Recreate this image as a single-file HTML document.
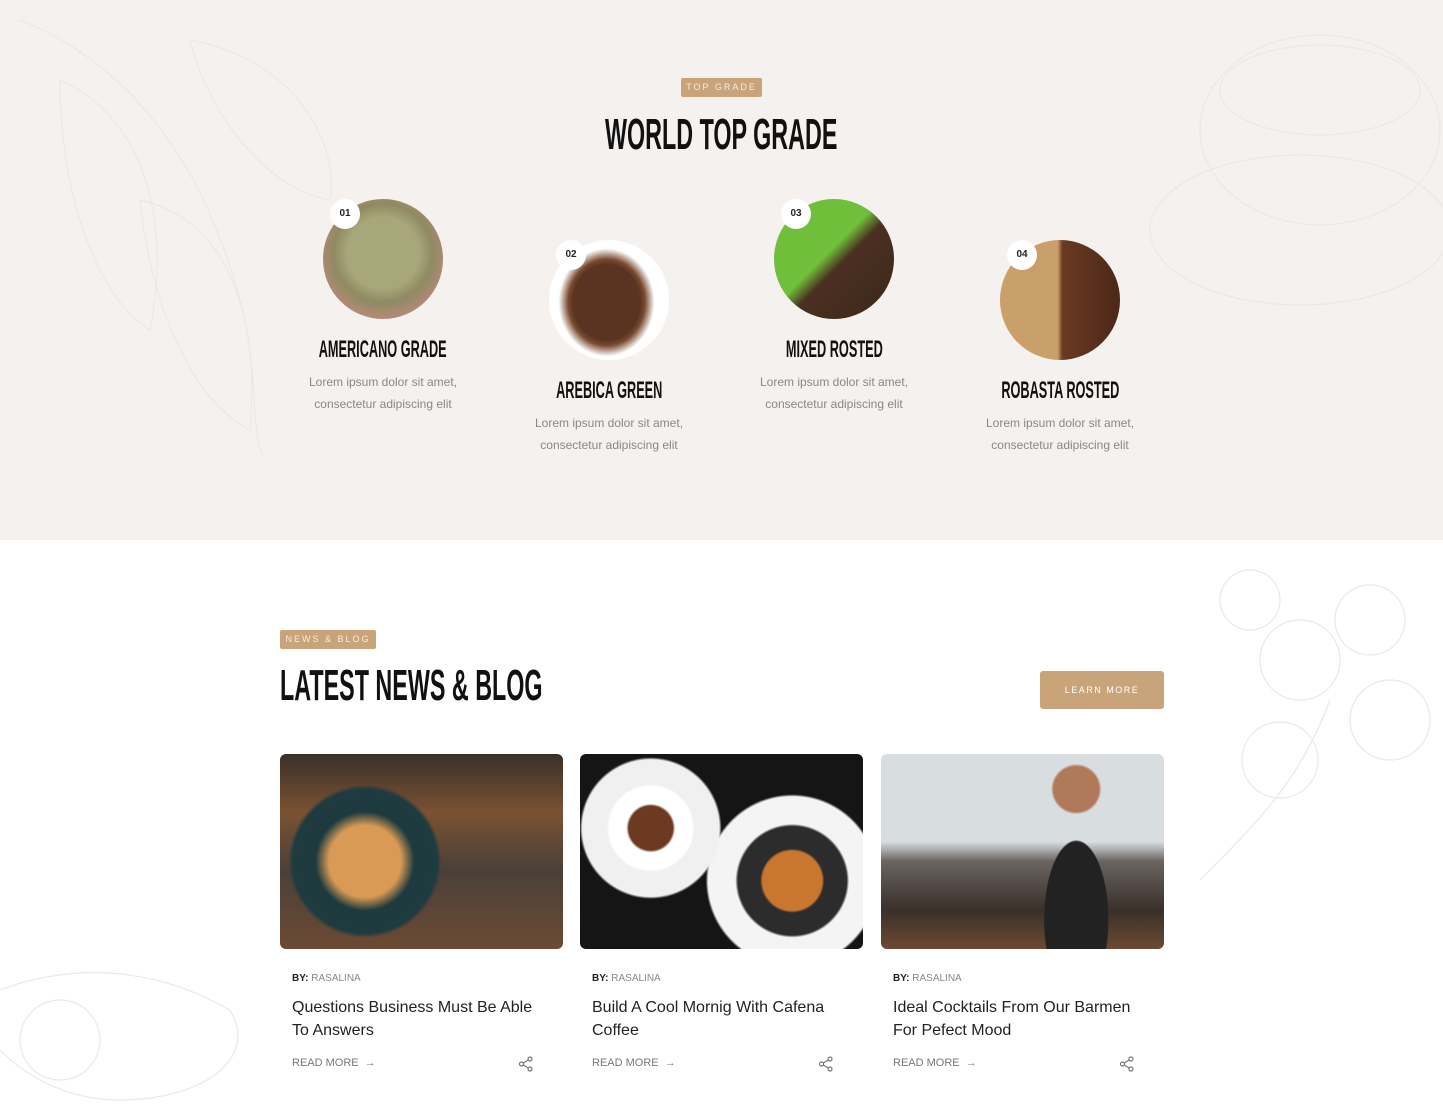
<!DOCTYPE html>
<html><head><meta charset="utf-8"><style>
*{margin:0;padding:0;box-sizing:border-box}
body{width:1443px;height:1116px;position:relative;background:#fff;font-family:"Liberation Sans",sans-serif;overflow:hidden}
.top{position:absolute;left:0;top:0;width:1443px;height:540px;background:#f4f1ee}
.cond{font-family:"Liberation Sans Narrow","Liberation Sans",sans-serif;font-weight:700;color:#111;display:inline-block;transform:scaleX(.53);white-space:nowrap}
.tag{position:absolute;background:#c9a37a;color:#f6ecdf;font-size:9px;letter-spacing:2px;text-align:center;border-radius:2px}
.item{position:absolute;width:300px;text-align:center}
.circ{width:120px;height:120px;border-radius:50%;margin:0 auto;position:relative}
.num{position:absolute;left:7px;top:0;width:30px;height:30px;border-radius:50%;background:#fff;font-size:10px;font-weight:700;line-height:30px;text-align:center;color:#222}
.item h3{margin-top:18px;height:26px;font-size:24px;line-height:26px}
.item p{margin-top:8px;font-size:12px;color:#888;line-height:22px}
.card{position:absolute;top:754px;width:283px}
.img{height:195px;border-radius:6px;overflow:hidden;position:relative}
.by{margin:24px 0 0 12px;font-size:10px;color:#888}
.by b{color:#222}
.ct{margin:12px 0 0 12px;font-size:16px;color:#222;line-height:23px}
.rm{position:absolute;top:303px;left:12px;font-size:11px;color:#777}
.sh{position:absolute;top:302px;left:238px}
</style></head><body>
<div class="top"></div>
<svg style="position:absolute;left:0;top:0" width="1443" height="1116" fill="none" stroke="#ebe8e5" stroke-width="1.2">
<path d="M20 20 C120 60 200 150 240 300 C260 380 250 420 262 455"/><path d="M60 80 C150 120 170 230 150 330 C100 300 60 200 60 80Z"/><path d="M140 200 C230 220 260 320 250 430 C190 400 150 300 140 200Z"/><path d="M190 40 C300 60 340 150 330 200 C270 190 210 120 190 40Z"/>
<ellipse cx="1320" cy="130" rx="120" ry="95"/><ellipse cx="1300" cy="230" rx="150" ry="75"/><ellipse cx="1320" cy="90" rx="100" ry="45"/>
<circle cx="1300" cy="660" r="40"/><circle cx="1370" cy="620" r="35"/><circle cx="1280" cy="760" r="38"/><circle cx="1390" cy="720" r="40"/><circle cx="1250" cy="600" r="30"/><path d="M1200 880 C1260 820 1300 780 1330 700"/>
<path d="M0 990 C80 960 160 970 230 1010 C260 1060 200 1100 120 1100 C60 1100 20 1070 0 1050"/><circle cx="60" cy="1040" r="40"/>
</svg>
<div class="tag" style="left:681px;top:78px;width:81px;height:19px;line-height:19px">TOP GRADE</div>
<div style="position:absolute;left:0;width:1443px;top:110px;text-align:center"><span class="cond" style="font-size:44px;line-height:50px">WORLD TOP GRADE</span></div>

<div class="item" style="left:233px;top:199px"><div class="circ" style="background:radial-gradient(circle at 50% 45%,#a8a77a 0 40%,#8f8a63 55%,#b78a78 75%,#5a5648)"><div class="num">01</div></div><h3><span class="cond">AMERICANO GRADE</span></h3><p>Lorem ipsum dolor sit amet,<br>consectetur adipiscing elit</p></div>
<div class="item" style="left:459px;top:240px"><div class="circ" style="background:radial-gradient(ellipse 40% 45% at 48% 52%,#5a3420 0 70%,#7a4a30 80%,#fff 100%)"><div class="num">02</div></div><h3><span class="cond">AREBICA GREEN</span></h3><p>Lorem ipsum dolor sit amet,<br>consectetur adipiscing elit</p></div>
<div class="item" style="left:684px;top:199px"><div class="circ" style="background:linear-gradient(135deg,#6fbf3a 0 45%,#4a3020 55%,#3b271b)"><div class="num">03</div></div><h3><span class="cond">MIXED ROSTED</span></h3><p>Lorem ipsum dolor sit amet,<br>consectetur adipiscing elit</p></div>
<div class="item" style="left:910px;top:240px"><div class="circ" style="background:linear-gradient(90deg,#c9a06a 0 48%,#6a3a22 52%,#4b2818)"><div class="num">04</div></div><h3><span class="cond">ROBASTA ROSTED</span></h3><p>Lorem ipsum dolor sit amet,<br>consectetur adipiscing elit</p></div>

<div class="tag" style="left:280px;top:630px;width:96px;height:19px;line-height:19px">NEWS &amp; BLOG</div>
<div style="position:absolute;left:280px;top:660px;width:400px"><span class="cond" style="font-size:44px;line-height:52px;transform-origin:left">LATEST NEWS &amp; BLOG</span></div>
<div style="position:absolute;left:1040px;top:671px;width:124px;height:38px;background:#c9a37a;border-radius:3px;color:#fff;font-size:9px;letter-spacing:1.5px;line-height:38px;text-align:center">LEARN MORE</div>

<div class="card" style="left:280px"><div class="img" style="background:radial-gradient(circle at 30% 55%,#d89a55 0 16%,#1d3a3e 22%,#1e3b40 32%,transparent 34%),linear-gradient(180deg,#3a3028,#7a5232 30%,#4a4038 60%,#6b4a33)"></div>
<div class="by"><b>BY:</b> RASALINA</div><div class="ct">Questions Business Must Be Able<br>To Answers</div><div class="rm">READ MORE &nbsp;→</div>
<svg class="sh" width="16" height="16" viewBox="0 0 16 16" fill="none" stroke="#777" stroke-width="1.2"><circle cx="12" cy="3" r="2"/><circle cx="3.5" cy="8" r="2"/><circle cx="12" cy="13" r="2"/><path d="M5.3 7 10.2 4M5.3 9 10.2 12"/></svg></div>

<div class="card" style="left:580px"><div class="img" style="background:radial-gradient(circle at 25% 38%,#6b3a20 0 9%,#fff 10% 17%,#f0f0f0 18% 28%,transparent 29%),radial-gradient(circle at 75% 65%,#c9772f 0 12%,#2c2c2c 13% 22%,#f4f4f4 23% 34%,transparent 35%),#151515"></div>
<div class="by"><b>BY:</b> RASALINA</div><div class="ct">Build A Cool Mornig With Cafena<br>Coffee</div><div class="rm">READ MORE &nbsp;→</div>
<svg class="sh" width="16" height="16" viewBox="0 0 16 16" fill="none" stroke="#777" stroke-width="1.2"><circle cx="12" cy="3" r="2"/><circle cx="3.5" cy="8" r="2"/><circle cx="12" cy="13" r="2"/><path d="M5.3 7 10.2 4M5.3 9 10.2 12"/></svg></div>

<div class="card" style="left:881px"><div class="img" style="background:radial-gradient(ellipse 14% 50% at 69% 85%,#222 0 80%,transparent 82%),radial-gradient(circle at 69% 18%,#b07a5a 0 9%,transparent 10%),linear-gradient(180deg,#d8dde0 0 45%,#6a6460 55%,#3a302a 80%,#6b4a33)"></div>
<div class="by"><b>BY:</b> RASALINA</div><div class="ct">Ideal Cocktails From Our Barmen<br>For Pefect Mood</div><div class="rm">READ MORE &nbsp;→</div>
<svg class="sh" width="16" height="16" viewBox="0 0 16 16" fill="none" stroke="#777" stroke-width="1.2"><circle cx="12" cy="3" r="2"/><circle cx="3.5" cy="8" r="2"/><circle cx="12" cy="13" r="2"/><path d="M5.3 7 10.2 4M5.3 9 10.2 12"/></svg></div>
</body></html>
